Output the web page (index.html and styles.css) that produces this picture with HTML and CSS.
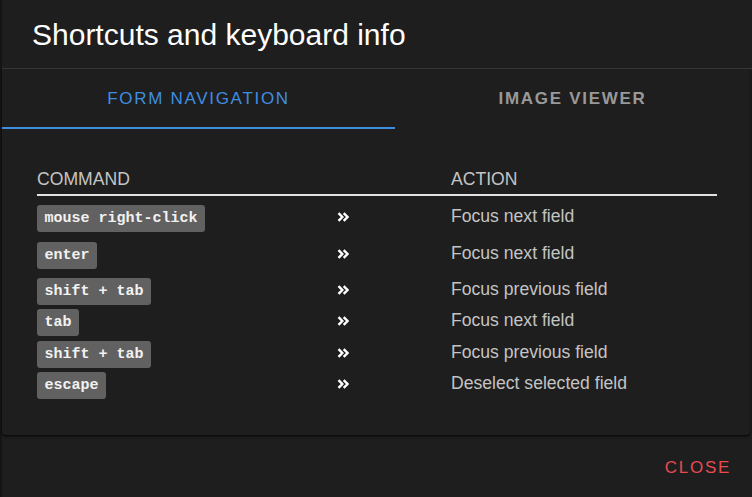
FILE: index.html
```html
<!DOCTYPE html>
<html lang="en">
<head>
<meta charset="utf-8">
<title>Shortcuts and keyboard info</title>
<link rel="stylesheet" href="styles.css">
</head>
<body>
<div class="dialog">
  <header class="dialog-header">
    <h1 class="title">Shortcuts and keyboard info</h1>
  </header>
  <section class="card">
    <nav class="tabs">
      <button class="tab active">FORM NAVIGATION</button>
      <button class="tab">IMAGE VIEWER</button>
    </nav>
    <div class="table">
      <div class="thead">
        <span>COMMAND</span>
        <span></span>
        <span>ACTION</span>
      </div>
      <div class="tbody">
        <div class="row loose">
          <span><kbd class="key">mouse right-click</kbd></span>
          <svg class="chev" viewBox="0 0 12 10" width="12" height="10"><path d="M1.5 1.2 5.3 5 1.5 8.8M6.7 1.2 10.5 5 6.7 8.8"/></svg>
          <span class="action">Focus next field</span>
        </div>
        <div class="row loose">
          <span><kbd class="key">enter</kbd></span>
          <svg class="chev" viewBox="0 0 12 10" width="12" height="10"><path d="M1.5 1.2 5.3 5 1.5 8.8M6.7 1.2 10.5 5 6.7 8.8"/></svg>
          <span class="action">Focus next field</span>
        </div>
        <div class="row loose">
          <span><kbd class="key">shift + tab</kbd></span>
          <svg class="chev" viewBox="0 0 12 10" width="12" height="10"><path d="M1.5 1.2 5.3 5 1.5 8.8M6.7 1.2 10.5 5 6.7 8.8"/></svg>
          <span class="action">Focus previous field</span>
        </div>
        <div class="row">
          <span><kbd class="key">tab</kbd></span>
          <svg class="chev" viewBox="0 0 12 10" width="12" height="10"><path d="M1.5 1.2 5.3 5 1.5 8.8M6.7 1.2 10.5 5 6.7 8.8"/></svg>
          <span class="action">Focus next field</span>
        </div>
        <div class="row">
          <span><kbd class="key">shift + tab</kbd></span>
          <svg class="chev" viewBox="0 0 12 10" width="12" height="10"><path d="M1.5 1.2 5.3 5 1.5 8.8M6.7 1.2 10.5 5 6.7 8.8"/></svg>
          <span class="action">Focus previous field</span>
        </div>
        <div class="row">
          <span><kbd class="key">escape</kbd></span>
          <svg class="chev" viewBox="0 0 12 10" width="12" height="10"><path d="M1.5 1.2 5.3 5 1.5 8.8M6.7 1.2 10.5 5 6.7 8.8"/></svg>
          <span class="action">Deselect selected field</span>
        </div>
      </div>
    </div>
  </section>
  <footer class="dialog-actions">
    <button class="close">CLOSE</button>
  </footer>
</div>
</body>
</html>
```

FILE: styles.css
```css
* { box-sizing: border-box; }

html, body {
  margin: 0;
  padding: 0;
  height: 100%;
}

body {
  background: #151515;
  font-family: "Liberation Sans", Arial, sans-serif;
  overflow: hidden;
}

.dialog {
  margin-left: 2px;
  width: 750px;
  height: 497px;
  background: #1e1e1e;
  display: flex;
  flex-direction: column;
}

.dialog-header {
  height: 69px;
  padding: 17px 0 0 30px;
  border-bottom: 1px solid #3a3a3a;
}

.title {
  margin: 0;
  font-size: 30px;
  line-height: 36px;
  font-weight: 400;
  color: #ffffff;
}

.card {
  width: 748px;
  background: #1e1e1e;
  border-radius: 0 0 4px 4px;
  box-shadow: 0 1px 2px rgba(0, 0, 0, 0.7), 0 2px 3px rgba(0, 0, 0, 0.25);
}

.tabs {
  display: grid;
  grid-template-columns: 393px 1fr;
  height: 60px;
}

.tab {
  background: none;
  border: 0;
  padding: 0;
  margin: 0;
  font-family: "Liberation Sans", Arial, sans-serif;
  font-size: 17px;
  letter-spacing: 1.7px;
  color: #999999;
  font-weight: 700;
  cursor: pointer;
}

.tab.active {
  color: #3e8ee0;
  font-weight: 400;
  box-shadow: inset 0 -2px 0 #3e8ee0;
}

.table {
  padding: 38px 33px 35.5px 35px;
}

.thead {
  display: grid;
  grid-template-columns: 300px 114px 1fr;
  font-size: 17.6px;
  line-height: 24px;
  color: #c4c4c4;
  padding-bottom: 3px;
  border-bottom: 2px solid #e2e2e2;
}

.row {
  display: grid;
  grid-template-columns: 300px 114px 1fr;
  align-items: baseline;
  padding-top: 4.5px;
}

.row.loose {
  padding-top: 9.33px;
}

.key {
  display: inline-block;
  height: 27px;
  line-height: 27px;
  padding: 0 7.5px;
  background: #616161;
  border-radius: 3px;
  color: #f2f2f2;
  font-family: "Liberation Mono", "Courier New", monospace;
  font-weight: 700;
  font-size: 15px;
}

.chev {
  margin-bottom: 1px;
}

.chev path {
  fill: none;
  stroke: #ffffff;
  stroke-width: 2.4;
}

.action {
  font-size: 17.6px;
  color: #c4c4c4;
}

.dialog-actions {
  flex: 1;
  display: flex;
  justify-content: flex-end;
  align-items: center;
  padding: 4px 21px 0 0;
}

.close {
  background: none;
  border: 0;
  padding: 0;
  font-family: "Liberation Sans", Arial, sans-serif;
  font-size: 17px;
  letter-spacing: 1.7px;
  color: #e84a50;
  cursor: pointer;
}
```
